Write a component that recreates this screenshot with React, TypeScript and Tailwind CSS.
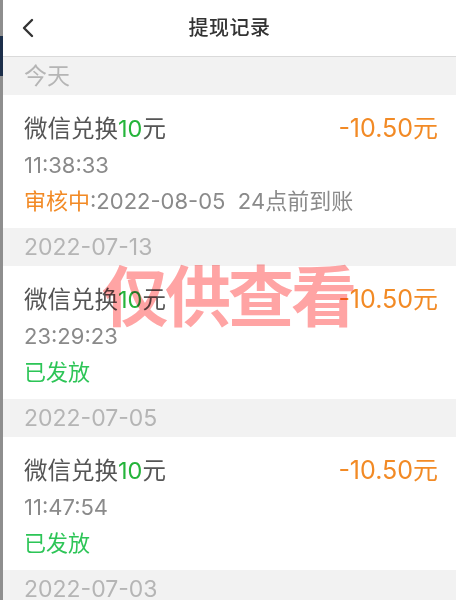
import React from 'react';

type Record = {
  date: string;
  time: string;
  status: 'pending' | 'done';
  note?: string;
};

const records: Record[] = [
  { date: '今天', time: '11:38:33', status: 'pending', note: '2022-08-05  24点前到账' },
  { date: '2022-07-13', time: '23:29:23', status: 'done' },
  { date: '2022-07-05', time: '11:47:54', status: 'done' },
  { date: '2022-07-03', time: '10:12:08', status: 'done' },
];

const font = { fontFamily: 'Inter, "Noto Sans CJK SC", sans-serif' };

const RecordCard = ({ item }: { item: Record }) => (
  <div className="h-[133px] bg-white pl-[21px] pr-[18px] pt-[16px]">
    <div className="flex items-center justify-between h-[36px]">
      <span className="text-[23.5px] text-[#555555]">
        微信兑换<span className="text-[#25b43b]">10</span>元
      </span>
      <span className="text-[25px] text-[#f28a25]">-10.50元</span>
    </div>
    <div className="flex items-center h-[36px] text-[22px] text-[#8a8a8a]">{item.time}</div>
    <div className="flex items-center h-[36px] text-[22px]">
      {item.status === 'pending' ? (
        <>
          <span className="text-[#f28a25]">审核中</span>
          <span className="text-[#8a8a8a] whitespace-pre">:{item.note}</span>
        </>
      ) : (
        <span className="text-[#2dc557]">已发放</span>
      )}
    </div>
  </div>
);

export default function App() {
  return (
    <div className="relative w-[456px] h-[600px] overflow-hidden bg-[#f2f2f2] flex" style={font}>
      {/* sliver of the screen behind */}
      <div className="w-[3px] shrink-0 bg-[#8e8e8e] flex flex-col">
        <div className="h-[36px]" />
        <div className="h-[40px] bg-[#1d2f4a]" />
      </div>

      <div className="flex-1 flex flex-col">
        <div className="relative h-[57px] shrink-0 bg-white border-b border-[#dadada] flex items-center justify-center">
          <svg
            className="absolute left-[18px] top-[18px]"
            width="14"
            height="20"
            viewBox="0 0 14 20"
            fill="none"
            stroke="#333333"
            strokeWidth="2.4"
            strokeLinecap="round"
            strokeLinejoin="round"
          >
            <path d="M11 2 L3 10 L11 18" />
          </svg>
          <span className="text-[20px] font-medium text-[#333333] tracking-[0.5px]">提现记录</span>
        </div>

        {records.map((r, i) => (
          <div key={i}>
            <div className="h-[38px] flex items-center pl-[21px] text-[23px] text-[#b5b5b5]">
              {r.date}
            </div>
            <RecordCard item={r} />
          </div>
        ))}
      </div>

      <div className="absolute left-[102px] top-[264px] text-[66px] font-bold leading-none tracking-[-3px] text-[#ffa4a4] mix-blend-multiply pointer-events-none">
        仅供查看
      </div>
    </div>
  );
}
